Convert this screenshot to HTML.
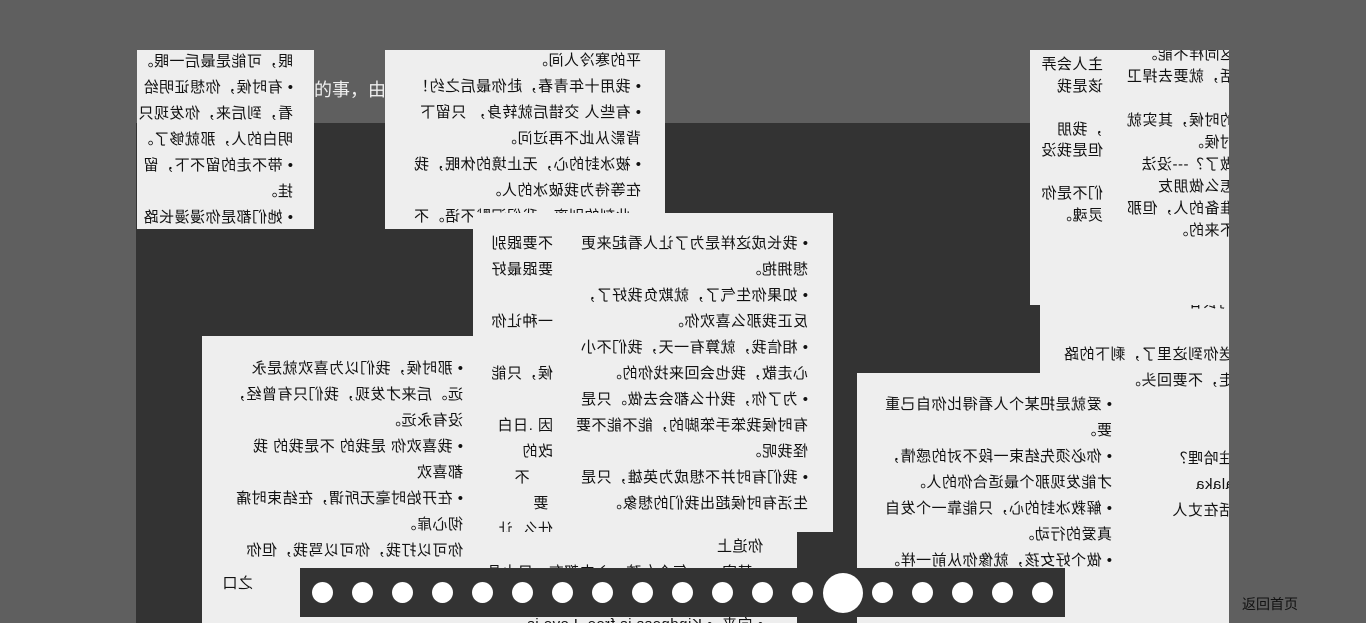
<!DOCTYPE html>
<html><head><meta charset="utf-8"><style>
*{margin:0;padding:0;box-sizing:border-box}
body{width:1366px;height:623px;overflow:hidden;background:#5f5f5f;position:relative;font-family:"Liberation Sans","Noto Sans CJK SC",sans-serif}
.abs{position:absolute}
.dark{background:#333}
.card{position:absolute;background:#eeeeee;overflow:hidden}
.m{position:absolute;transform:scaleX(-1);font-size:15px;letter-spacing:0.5px;line-height:26px;color:#111;white-space:nowrap;overflow:hidden}
.dot{position:absolute;width:21px;height:21px;border-radius:50%;background:#fff;top:582px}
</style></head><body>
<div class="abs" style="left:314px;top:76px;color:#eee;font-size:18px;font-family:'Liberation Mono','Noto Sans CJK SC',monospace">的事，由</div>
<div class="abs dark" style="left:136px;top:123px;width:904px;height:500px"></div>
<div class="card" style="left:1040px;top:300px;width:189px;height:323px">
 <div class="m" style="left:0;width:200px;padding-left:6px;top:-10px">
 <div>门衣廿</div><div>&nbsp;</div><div>送你到这里了，剩下的路</div><div>走，不要回头。</div><div>&nbsp;</div><div>&nbsp;</div><div>注哈哩？</div><div>alaka</div><div>活在丈人</div></div>
</div>
<div class="card" style="left:1030px;top:50px;width:199px;height:255px">
 <div class="m" style="left:73px;width:140px;padding-left:8px;top:-6px;line-height:22px"><div>这同样不能。</div><div>活，就要去捍卫</div><div>&nbsp;</div><div>的时候，其实就</div><div>时候。</div><div>做了？---没法</div><div>怎么做朋友</div><div>准备的人，但那</div><div>不来的。</div></div>
 <div class="m" style="left:0;width:73px;padding-left:0;top:4px;line-height:21.5px"><div>主人会弄</div><div>该是我</div><div>&nbsp;</div><div>，我朋</div><div>但是我没</div><div>&nbsp;</div><div>们不是你</div><div>灵魂。</div></div>
</div>
<div class="card" style="left:137px;top:50px;width:177px;height:179px">
 <div class="m" style="left:0;width:177px;padding-left:21px;top:-1px"><div>眼，可能是最后一眼。</div><div>• 有时候，你想证明给</div><div>看，到后来，你发现只</div><div>明白的人，那就够了。</div><div>• 带不走的留不下，留</div><div>挂。</div><div>• 她们都是你漫漫长路</div><div>过的好姑娘</div></div>
</div>
<div class="card" style="left:385px;top:50px;width:280px;height:179px">
 <div class="m" style="left:0;width:280px;padding-left:24px;top:-2px"><div>平的寒冷人间。</div><div>• 我用十年青春，赴你最后之约！</div><div>• 有些人 交错后就转身， 只留下</div><div>背影从此不再过问。</div><div>• 被冰封的心，无止境的休眠，我</div><div>在等待为我破冰的人。</div><div>• 此刻的别离，我们沉默不语。不</div><div>除日常</div></div>
</div>
<div class="card" style="left:202px;top:336px;width:595px;height:287px">
 <div class="m" style="left:0;width:281px;padding-left:20px;top:20px"><div>• 那时候，我们以为喜欢就是永</div><div>远。后来才发现，我们只有曾经，</div><div>没有永远。</div><div>• 我喜欢你 是我的 不是我的 我</div><div>都喜欢</div><div>• 在开始时毫无所谓，在结束时痛</div><div>彻心扉。</div><div>你可以打我，你可以骂我，但你</div><div>才不要讲我的坏话</div></div>
 <div class="m" style="left:0;width:281px;padding-left:230px;top:235px"><div>之口</div></div>
 <div class="m" style="left:0;width:281px;padding-left:20px;top:262px"><div>&nbsp;&nbsp;&nbsp;&nbsp;&nbsp;&nbsp;&nbsp;&nbsp;&nbsp;距离</div><div>我 沉太情爱，你上不追怕</div></div>
 <div class="m" style="left:281px;width:300px;padding-left:20px;top:198px"><div>你追上</div><div>• 其实&nbsp;&nbsp;&nbsp;&nbsp;&nbsp;• 每个女孩，心中都有一只水晶</div><div>&nbsp;</div><div>• 向来&nbsp;&nbsp;• Kindness is free. Love is</div></div>
</div>
<div class="card" style="left:473px;top:213px;width:360px;height:319px">
 <div class="m" style="left:102px;width:258px;padding-left:25px;top:18px"><div>• 我长成这样是为了让人看起来更</div><div>想拥抱。</div><div>• 如果你生气了，就欺负我好了，</div><div>反正我那么喜欢你。</div><div>• 相信我，就算有一天，我们不小</div><div>心走散，我也会回来找你的。</div><div>• 为了你，我什么都会去做。只是</div><div>有时候我笨手笨脚的，能不能不要</div><div>怪我呢。</div><div>• 我们有时并不想成为英雄，只是</div><div>生活有时候超出我们的想象。</div></div>
 <div class="m" style="left:15px;width:65px;padding-left:0;top:18px;height:301px"><div>不要跟别</div><div>要跟最好</div><div>&nbsp;</div><div>一种让你</div><div>&nbsp;</div><div>候，只能</div><div>&nbsp;</div><div>因 .日白</div><div>改的</div><div>&nbsp;&nbsp;&nbsp;&nbsp;&nbsp;不</div><div>&nbsp;要</div><div>什么&nbsp;&nbsp;让</div></div>
</div>
<div class="card" style="left:857px;top:373px;width:263px;height:250px">
 <div class="m" style="left:0;width:263px;padding-left:8px;top:19px"><div>• 爱就是把某个人看得比你自己重</div><div>要。</div><div>• 你必须先结束一段不对的感情，</div><div>才能发现那个最适合你的人。</div><div>• 解救冰封的心，只能靠一个发自</div><div>真爱的行动。</div><div>• 做个好女孩，就像你从前一样。</div></div>
</div>
<div class="abs dark" style="left:300px;top:568px;width:765px;height:49px"></div>
<div class="dot" style="left:312px"></div><div class="dot" style="left:352px"></div><div class="dot" style="left:392px"></div><div class="dot" style="left:432px"></div><div class="dot" style="left:472px"></div><div class="dot" style="left:512px"></div><div class="dot" style="left:552px"></div><div class="dot" style="left:592px"></div><div class="dot" style="left:632px"></div><div class="dot" style="left:672px"></div><div class="dot" style="left:712px"></div><div class="dot" style="left:752px"></div><div class="dot" style="left:792px"></div>
<div class="dot" style="left:823px;top:573px;width:40px;height:40px"></div>
<div class="dot" style="left:872px"></div><div class="dot" style="left:912px"></div><div class="dot" style="left:952px"></div><div class="dot" style="left:992px"></div><div class="dot" style="left:1032px"></div>
<div class="abs" style="left:1242px;top:594px;font-size:14px;color:#111">返回首页</div>
</body></html>
